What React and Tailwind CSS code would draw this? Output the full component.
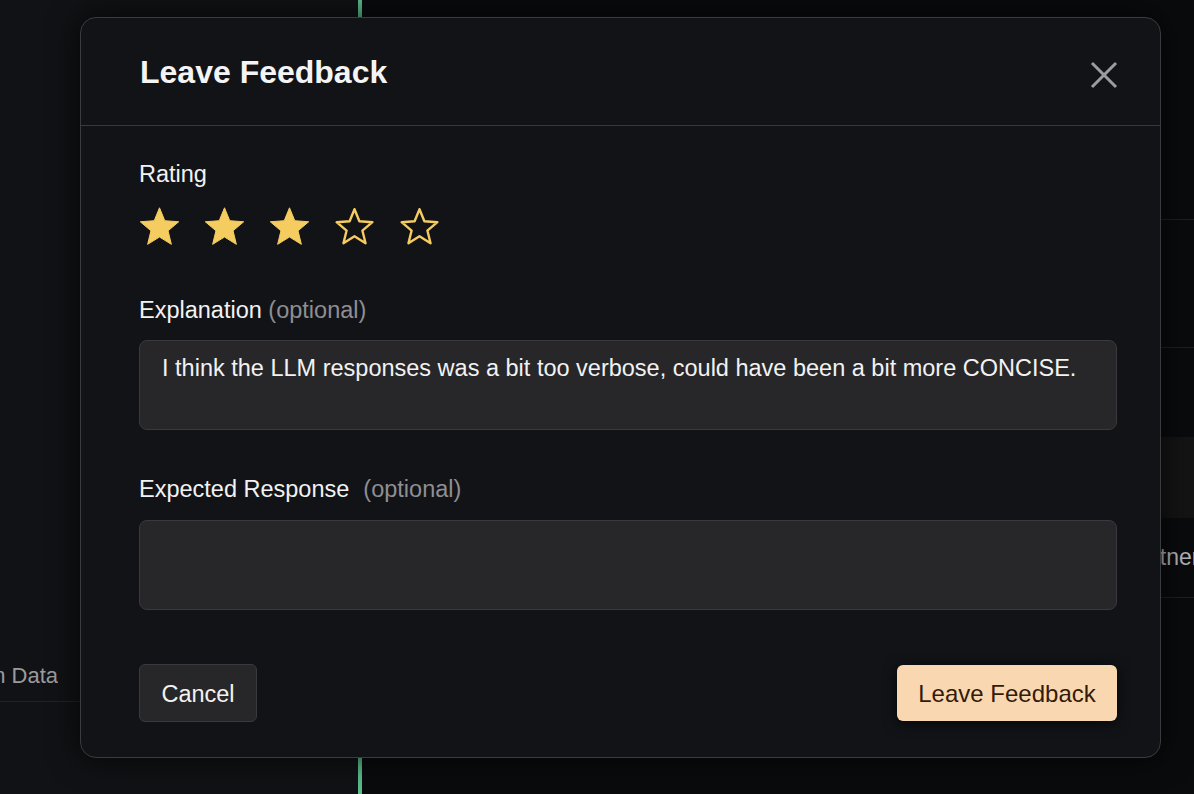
import React, { useState } from "react";

function starPoints(cx, cy, R, r) {
  const pts = [];
  for (let i = 0; i < 10; i++) {
    const rad = i % 2 === 0 ? R : r;
    const a = (Math.PI / 5) * i - Math.PI / 2;
    pts.push(`${(cx + rad * Math.cos(a)).toFixed(2)},${(cy + rad * Math.sin(a)).toFixed(2)}`);
  }
  return pts.join(" ");
}

function Star({ filled }) {
  return (
    <svg width="41" height="38" viewBox="0 0 41 38" className="block">
      {filled ? (
        <polygon
          points={starPoints(20.5, 21, 20.2, 9)}
          fill="#f5cc5f"
          stroke="#f5cc5f"
          strokeWidth="1"
          strokeLinejoin="round"
        />
      ) : (
        <polygon
          points={starPoints(20.5, 21, 18.8, 8.3)}
          fill="none"
          stroke="#f5cc5f"
          strokeWidth="2.4"
          strokeLinejoin="round"
        />
      )}
    </svg>
  );
}

function CloseIcon() {
  return (
    <svg width="28" height="28" viewBox="0 0 28 28" className="block">
      <path d="M2 2 L26 26 M26 2 L2 26" stroke="#9d9d9f" strokeWidth="3" strokeLinecap="butt" />
    </svg>
  );
}

export default function App() {
  const [rating, setRating] = useState(3);

  return (
    <div className="relative w-[1194px] h-[794px] overflow-hidden bg-[#0a0b0d] font-['Liberation_Sans',Arial,sans-serif]">
      {/* page behind the dialog */}
      <div className="flex h-full">
        <div className="w-[358px] shrink-0 h-full bg-[#111215] flex flex-col">
          <div className="h-[648px]" />
          <div className="h-[54px] border-b border-[#222327] flex items-center pt-[2px]">
            <div className="w-[58px] flex justify-end overflow-hidden whitespace-nowrap">
              <span className="text-[22px] text-[#9b9b9e]">Human Data</span>
            </div>
          </div>
        </div>
        <div className="w-[4px] shrink-0 h-full bg-[#5cbd8d]" />
        <div className="flex-1 min-w-0 h-full bg-[#0a0b0d] flex flex-col overflow-hidden">
          <div className="h-[220px] border-b border-[#1f2024]" />
          <div className="h-[128px] border-b border-[#1f2024]" />
          <div className="h-[89px]" />
          <div className="h-[81px] bg-[#141415]" />
          <div className="h-[80px] border-b border-[#1f2024] flex items-center pl-[762px] whitespace-nowrap">
            <span className="text-[23px] text-[#b5b5b8]">Partner</span>
          </div>
        </div>
      </div>

      {/* dialog */}
      <div className="absolute left-[80px] top-[17px] w-[1081px] rounded-[16px] border border-[#3a3b3e] bg-[#121317] shadow-[0_0_32px_rgba(0,0,0,0.75)]">
        <div className="h-[108px] border-b border-[#38393c] flex items-center justify-between pl-[59px] pr-[42px]">
          <h2 className="mt-[1px] text-[32px] font-semibold text-[#f4f4f5]">Leave Feedback</h2>
          <button className="mt-[6px]">
            <CloseIcon />
          </button>
        </div>

        <div className="pt-[34px] pb-[35px] pl-[58px] pr-[43px] flex flex-col">
          <div className="h-[28px] leading-[28px] text-[23.5px] text-[#f2f2f3]">Rating</div>
          <div className="mt-[19px] flex gap-[24px] h-[38px]">
            {[1, 2, 3, 4, 5].map((n) => (
              <button key={n} onClick={() => setRating(n)}>
                <Star filled={n <= rating} />
              </button>
            ))}
          </div>

          <div className="mt-[51px] h-[28px] leading-[28px] text-[23.5px] text-[#f2f2f3]">
            Explanation <span className="text-[#8e8e93]">(optional)</span>
          </div>
          <textarea
            readOnly
            className="mt-[16px] h-[90px] w-full resize-none rounded-[8px] border border-[#3a3a3e] bg-[#27272a] px-[22px] pt-[13px] text-[23.5px] leading-[28px] text-[#f2f2f3] outline-none"
            defaultValue="I think the LLM responses was a bit too verbose, could have been a bit more CONCISE."
          />

          <div className="mt-[45px] h-[28px] leading-[28px] text-[23.5px] text-[#f2f2f3]">
            Expected Response<span className="ml-[14px] text-[#8e8e93]">(optional)</span>
          </div>
          <textarea
            readOnly
            className="mt-[17px] h-[90px] w-full resize-none rounded-[8px] border border-[#3a3a3e] bg-[#27272a] px-[22px] pt-[13px] text-[23.5px] leading-[28px] text-[#f2f2f3] outline-none"
            defaultValue=""
          />

          <div className="mt-[54px] h-[58px] flex items-center justify-between">
            <button className="h-[58px] w-[118px] rounded-[6px] border border-[#3a3a3e] bg-[#27272a] pt-[3px] text-[23.5px] text-[#f2f2f3]">
              Cancel
            </button>
            <button className="h-[56px] w-[220px] rounded-[6px] bg-[#f9d8b1] pt-[1px] text-[24px] text-[#341a0b] shadow-[0_2px_14px_rgba(0,0,0,0.7)]">
              Leave Feedback
            </button>
          </div>
        </div>
      </div>
    </div>
  );
}
